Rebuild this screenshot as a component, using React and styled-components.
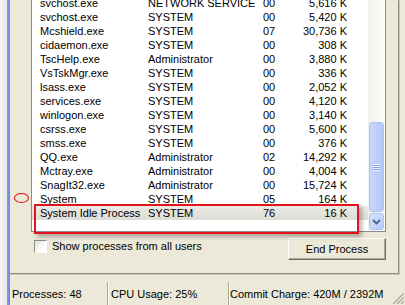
import styled, { createGlobalStyle } from 'styled-components';

const Global = createGlobalStyle`
    body {
        margin: 0;
        background: #ece9d8;
        overflow: hidden;
        font-family: "Liberation Sans", Arial, sans-serif;
        font-size: 11px;
        color: #000;
    }
`;

const Window = styled.div`
    position: relative;
    width: 405px;
    height: 305px;
    display: flex;
    overflow: hidden;
    background: #ece9d8;
`;

const OuterStrip = styled.div`
    width: 7px;
    background: linear-gradient(to right, #f4f4f2, #e6e6e6);
`;

const FrameEdge = styled.div`
    width: 3px;
    background: linear-gradient(to right, #8a9ce8, #6f84e2);
`;

const Client = styled.div`
    flex: 1;
    display: flex;
    flex-direction: column;
`;

const TabPage = styled.div`
    height: 274px;
    margin-right: 6px;
    box-sizing: border-box;
    border-right: 1px solid #8d8a7d;
    border-bottom: 1px solid #8d8a7d;
    box-shadow: 1px 1px 0 #c9c6b6;
    display: flex;
    flex-direction: column;
`;

const ListBox = styled.div`
    height: 232px;
    margin: 0 12px 0 21px;
    box-sizing: border-box;
    border: 1px solid #8c8c8c;
    border-top: none;
    display: flex;
    background: #fff;
`;

const Rows = styled.div`
    flex: 1;
    overflow: hidden;
`;

const RowsInner = styled.div`
    margin-top: -4px;
`;

const Row = styled.div`
    display: grid;
    grid-template-columns: 108px 115px 30px 54px;
    height: 14px;
    line-height: 14px;
    padding-left: 8px;
    white-space: nowrap;
    background: ${p => (p.$marked ? 'linear-gradient(#ebeae6, #dedcd6)' : 'transparent')};
`;

const Mem = styled.span`
    text-align: right;
`;

const ScrollBar = styled.div`
    width: 17px;
    display: flex;
    flex-direction: column;
    background: linear-gradient(to right, #f2f1ec, #fdfdfb);
`;

const ScrollSpacer = styled.div`
    flex: 1;
`;

const Thumb = styled.div`
    height: 90px;
    margin: 0 1px 1px 1px;
    box-sizing: border-box;
    border: 1px solid #b0c3f2;
    border-radius: 3px;
    background: linear-gradient(to right, #c8d6fb, #bccefb 60%, #b4c8f8);
    display: flex;
    align-items: center;
    justify-content: center;
`;

const Grip = styled.div`
    width: 7px;
    height: 7px;
    background: repeating-linear-gradient(#eef3fe 0 1px, #8ca3e6 1px 2px);
`;

const ArrowButton = styled.div`
    height: 17px;
    margin: 0 1px 1px 1px;
    box-sizing: border-box;
    border: 1px solid #b0c3f2;
    border-radius: 3px;
    background: linear-gradient(135deg, #d5e0fd, #b7cbfa);
    display: flex;
    align-items: center;
    justify-content: center;
`;

const Options = styled.div`
    display: flex;
    justify-content: space-between;
    align-items: flex-start;
    padding: 6px 12px 0 24px;
`;

const CheckLabel = styled.label`
    display: flex;
    align-items: center;
    gap: 5px;
    margin-top: 2px;
    line-height: 13px;
`;

const CheckBox = styled.span`
    width: 13px;
    height: 13px;
    box-sizing: border-box;
    border-top: 1px solid #8e8d86;
    border-left: 1px solid #8e8d86;
    border-right: 1px solid #fff;
    border-bottom: 1px solid #fff;
    background: linear-gradient(135deg, #e4e3dc, #fff 70%);
`;

const Button = styled.button`
    width: 98px;
    height: 22px;
    padding: 0;
    box-sizing: border-box;
    font: inherit;
    color: #000;
    background: #ece9d8;
    border-top: 1px solid #fff;
    border-left: 1px solid #fff;
    border-right: 1px solid #716f64;
    border-bottom: 1px solid #716f64;
    box-shadow: inset -1px -1px 0 #aca899;
`;

const StatusBar = styled.div`
    flex: 1;
    display: flex;
    align-items: flex-end;
    gap: 1px;
    padding-top: 7px;
`;

const Panel = styled.div`
    width: ${p => (p.$w ? p.$w + 'px' : 'auto')};
    flex: ${p => (p.$w ? 'none' : '1')};
    height: 23px;
    box-sizing: border-box;
    padding-left: ${p => p.$pad}px;
    display: flex;
    align-items: center;
    white-space: nowrap;
    border-right: ${p => (p.$w ? '1px solid #aca899' : 'none')};
    box-shadow: ${p => (p.$w ? '1px 0 0 #fff' : 'none')};
`;

const SizeGrip = styled.svg`
    flex: none;
    margin: 0 1px 1px 0;
`;

const RedBox = styled.div`
    position: absolute;
    left: 34px;
    top: 204px;
    width: 325px;
    height: 30px;
    box-sizing: border-box;
    border: 2px solid #e3131c;
    box-shadow: 3px 3px 4px rgba(0, 0, 0, 0.28);
`;

const RedRing = styled.div`
    position: absolute;
    left: 14px;
    top: 193px;
    width: 15px;
    height: 10px;
    box-sizing: border-box;
    border: 1.5px solid #e3131c;
    border-radius: 50%;
`;

const procs = [
    ['svchost.exe', 'NETWORK SERVICE', '00', '5,616 K'],
    ['svchost.exe', 'SYSTEM', '00', '5,420 K'],
    ['Mcshield.exe', 'SYSTEM', '07', '30,736 K'],
    ['cidaemon.exe', 'SYSTEM', '00', '308 K'],
    ['TscHelp.exe', 'Administrator', '00', '3,880 K'],
    ['VsTskMgr.exe', 'SYSTEM', '00', '336 K'],
    ['lsass.exe', 'SYSTEM', '00', '2,052 K'],
    ['services.exe', 'SYSTEM', '00', '4,120 K'],
    ['winlogon.exe', 'SYSTEM', '00', '3,140 K'],
    ['csrss.exe', 'SYSTEM', '00', '5,600 K'],
    ['smss.exe', 'SYSTEM', '00', '376 K'],
    ['QQ.exe', 'Administrator', '02', '14,292 K'],
    ['Mctray.exe', 'Administrator', '00', '4,004 K'],
    ['SnagIt32.exe', 'Administrator', '00', '15,724 K'],
    ['System', 'SYSTEM', '05', '164 K'],
    ['System Idle Process', 'SYSTEM', '76', '16 K'],
];

export default function App() {
    return (<>
        <Global />
        <Window>
            <OuterStrip />
            <FrameEdge />
            <Client>
                <TabPage>
                    <ListBox>
                        <Rows>
                            <RowsInner>
                                {procs.map((p, i) => (
                                    <Row key={i} $marked={i === procs.length - 1}>
                                        <span>{p[0]}</span>
                                        <span>{p[1]}</span>
                                        <span>{p[2]}</span>
                                        <Mem>{p[3]}</Mem>
                                    </Row>
                                ))}
                            </RowsInner>
                        </Rows>
                        <ScrollBar>
                            <ScrollSpacer />
                            <Thumb><Grip /></Thumb>
                            <ArrowButton>
                                <svg width="9" height="6" viewBox="0 0 9 6">
                                    <path d="M1 1 L4.5 4.5 L8 1" fill="none" stroke="#4d6185" strokeWidth="1.8" />
                                </svg>
                            </ArrowButton>
                        </ScrollBar>
                    </ListBox>
                    <Options>
                        <CheckLabel><CheckBox />Show processes from all users</CheckLabel>
                        <Button>End Process</Button>
                    </Options>
                </TabPage>
                <StatusBar>
                    <Panel $w={98} $pad={2}>Processes: 48</Panel>
                    <Panel $w={120} $pad={2}>CPU Usage: 25%</Panel>
                    <Panel $pad={0}>Commit Charge: 420M / 2392M</Panel>
                    <SizeGrip width="13" height="13" viewBox="0 0 13 13">
                        {[0, 4, 8].map(o => (
                            <g key={o}>
                                <line x1={o + 1} y1="13" x2="13" y2={o + 1} stroke="#fff" strokeWidth="1" />
                                <line x1={o + 2} y1="13" x2="13" y2={o + 2} stroke="#aca899" strokeWidth="1.4" />
                            </g>
                        ))}
                    </SizeGrip>
                </StatusBar>
            </Client>
            <RedRing />
            <RedBox />
        </Window>
    </>);
}
